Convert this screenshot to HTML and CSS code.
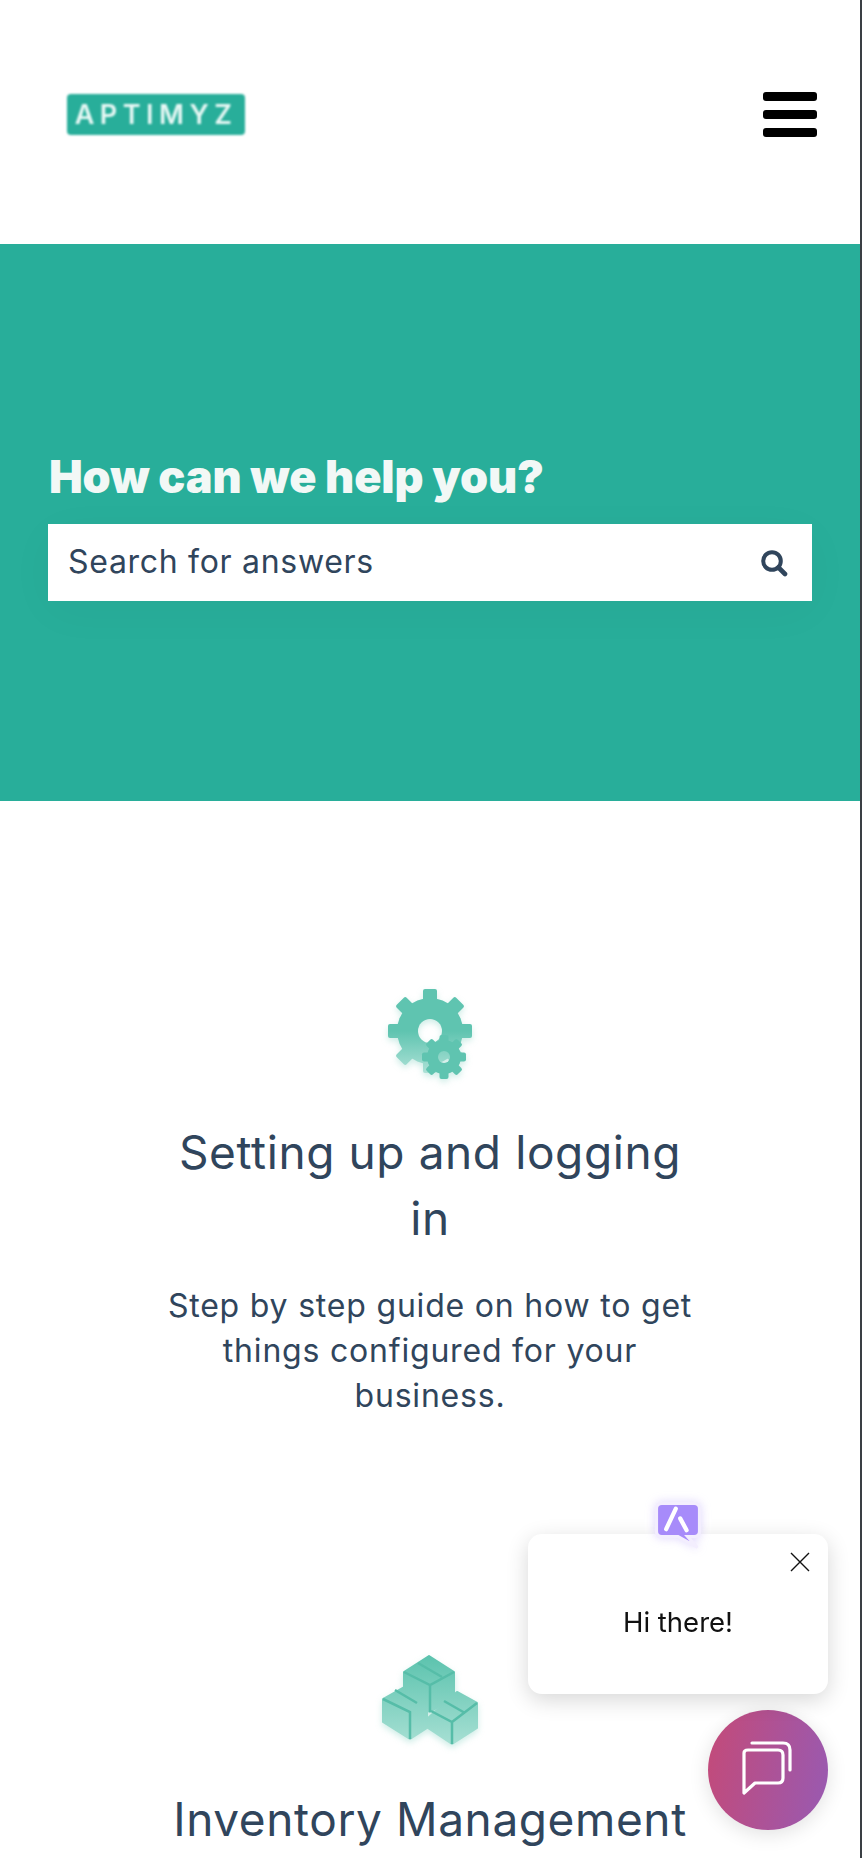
FILE: index.html
```html
<!DOCTYPE html>
<html lang="en">
<head>
    <meta charset="UTF-8">
    <meta name="viewport" content="width=device-width, initial-scale=1.0">
    <title>Aptimyz Help Center</title>
    <link rel="stylesheet" href="styles.css">
</head>
<body>

    <div class="page">
        <header class="topbar">
            <a class="logo" href="#"><span class="logo-text">APTIMYZ</span></a>
            <button class="menu-btn" aria-label="Menu">
                <span></span>
                <span></span>
                <span></span>
            </button>
        </header>

        <section class="hero">
            <h1>How can we help you?</h1>
            <div class="search">
                <span class="search-text">Search for answers</span>
                <svg class="search-icon" viewBox="0 0 28 28">
                    <circle cx="12" cy="12" r="8.8" fill="none" stroke="#30455c" stroke-width="4"/>
                    <path d="M18.5 18.5 L25 25" stroke="#30455c" stroke-width="4.6" stroke-linecap="round"/>
                </svg>
            </div>
        </section>

        <section class="topics">
            <div class="topic">
                <svg class="topic-icon gear-icon" viewBox="0 0 100 100">
                    <defs>
                        <linearGradient id="gearFade" gradientUnits="userSpaceOnUse" x1="0" y1="44" x2="0" y2="90">
                            <stop offset="0" stop-color="#5fc4b0"/>
                            <stop offset="1" stop-color="#b4e4da"/>
                        </linearGradient>
                        <mask id="bigGear">
                            <g fill="#fff">
                                <circle cx="50" cy="44" r="33"/>
                                <rect x="43" y="2" width="14" height="84" rx="2"/>
                                <rect x="43" y="2" width="14" height="84" rx="2" transform="rotate(45 50 44)"/>
                                <rect x="43" y="2" width="14" height="84" rx="2" transform="rotate(90 50 44)"/>
                                <rect x="43" y="2" width="14" height="84" rx="2" transform="rotate(135 50 44)"/>
                            </g>
                            <circle cx="50" cy="44" r="12" fill="#000"/>
                        </mask>
                        <mask id="smallGear">
                            <g fill="#fff">
                                <circle cx="64" cy="70" r="17"/>
                                <rect x="59.500" y="48" width="9" height="44" rx="2"/>
                                <rect x="59.500" y="48" width="9" height="44" rx="2" transform="rotate(45 64 70)"/>
                                <rect x="59.500" y="48" width="9" height="44" rx="2" transform="rotate(90 64 70)"/>
                                <rect x="59.500" y="48" width="9" height="44" rx="2" transform="rotate(135 64 70)"/>
                            </g>
                            <circle cx="64" cy="70" r="6" fill="#000"/>
                        </mask>
                    </defs>
                    <rect width="100" height="100" fill="url(#gearFade)" mask="url(#bigGear)"/>
                    <rect width="100" height="100" fill="#5fc4b0" mask="url(#smallGear)"/>
                </svg>
                <h2>Setting up and logging in</h2>
                <p>Step by step guide on how to get things configured for your business.</p>
            </div>

            <div class="topic">
                <svg class="topic-icon box-icon" viewBox="0 0 100 100">
                    <defs>
                        <linearGradient id="boxFade" gradientUnits="userSpaceOnUse" x1="0" y1="5" x2="0" y2="95">
                            <stop offset="0" stop-color="#5cc3ae"/>
                            <stop offset="1" stop-color="#a8e0d4"/>
                        </linearGradient>
                    </defs>
                    <g fill="url(#boxFade)" stroke="url(#boxFade)" stroke-width="2" stroke-linejoin="round">
                        <polygon points="3,48 26,35 47,48 47,77 30,88 3,71"/>
                        <polygon points="48,67 77,41 97,52 97,77 72,93 48,77"/>
                        <polygon points="24,21 49,5 74,21 74,47 50,61 24,47"/>
                    </g>
                    <g fill="none" stroke="#56bda8" stroke-width="2.500">
                        <path d="M3 48 L30 61 V88"/>
                        <path d="M15 39 L37 52"/>
                        <path d="M24 21 L50 34 L74 21 M50 34 V61"/>
                        <path d="M38 12 L62 26"/>
                        <path d="M51 60 L72 71 L97 52 M72 71 V93"/>
                        <path d="M64 50 L85 62"/>
                    </g>
                </svg>
                <h2>Inventory Management</h2>
            </div>
        </section>
    </div>

    <div class="chat-widget">
        <svg class="chat-avatar" viewBox="0 0 48 52">
            <path d="M9 4 H39 Q44 4 44 9 V30 Q44 35 39 35 H33 L42 45 L24 35 H9 Q4 35 4 30 V9 Q4 4 9 4 Z" fill="#a78bfa" stroke="#f3eefe" stroke-width="3"/>
            <path d="M22 9 L13 28" stroke="#fff" stroke-width="4" stroke-linecap="round"/>
            <path d="M26 18 L32 29" stroke="#fff" stroke-width="4" stroke-linecap="round"/>
        </svg>
        <div class="chat-popup">
            <svg class="chat-close" viewBox="0 0 20 20">
                <path d="M1 1 L19 19 M19 1 L1 19" stroke="#111" stroke-width="1.400"/>
            </svg>
            <span>Hi there!</span>
        </div>
        <div class="chat-btn">
            <svg viewBox="0 0 60 60">
                <path d="M14 3 H45 Q52 3 52 10 V30" fill="none" stroke="#fff" stroke-width="3.200" stroke-linecap="round"/>
                <path d="M6 13 Q6 10 10 10 H40 Q45 10 45 15 V38 Q45 43 40 43 H17 L6 53 Z" fill="none" stroke="#fff" stroke-width="3.200" stroke-linejoin="round"/>
            </svg>
        </div>
    </div>

</body>
</html>
```

FILE: styles.css
```css
html, body {
    margin: 0;
    padding: 0;
    height: 100%;
    overflow: hidden;
    background-color: white;
}
body {
    font-family: "Inter", "Noto Sans", sans-serif;
    color: #30455c;
}
.page {
    width: 860px;
    height: 1858px;
    overflow: hidden;
    border-right: 2px solid #3a3f44;
}
.topbar {
    height: 244px;
    display: flex;
    align-items: flex-start;
    justify-content: space-between;
    padding: 92px 43px 0 67px;
    box-sizing: border-box;
}
.logo {
    display: flex;
    align-items: center;
    justify-content: center;
    width: 178px;
    height: 41px;
    margin-top: 2px;
    background-color: #28ae9a;
    border-radius: 4px;
    text-decoration: none;
    filter: blur(0.8px);
}
.logo-text {
    color: #e8f8f5;
    font-size: 27px;
    letter-spacing: 5.500px;
    font-weight: 600;
}
.menu-btn {
    display: flex;
    flex-direction: column;
    gap: 9px;
    width: 54px;
    padding: 0;
    border: none;
    background: none;
}
.menu-btn span {
    display: block;
    height: 9px;
    background-color: black;
    border-radius: 3px;
}
.hero {
    height: 557px;
    box-sizing: border-box;
    padding: 208px 48px 0;
    background-color: #28ae9a;
}
.hero h1 {
    margin: 0 0 22px;
    padding-left: 1px;
    color: #f2f8f6;
    font-size: 45px;
    line-height: 50px;
    font-weight: 900;
    letter-spacing: -0.15px;
}
.search {
    display: flex;
    align-items: center;
    justify-content: space-between;
    height: 77px;
    padding: 0 24px 0 20px;
    background-color: white;
    box-shadow: 0 10px 50px rgba(0, 0, 0, 0.03);
}
.search-text {
    margin-top: -3px;
    font-size: 32px;
    letter-spacing: 0.7px;
}
.search-icon {
    width: 28px;
    height: 28px;
}
.topics {
    display: flex;
    flex-direction: column;
    align-items: center;
}
.topic {
    width: 540px;
    text-align: center;
}
.topic-icon {
    display: block;
    margin: 0 auto;
    width: 100px;
    height: 100px;
    filter: drop-shadow(0 3px 3px rgba(95, 196, 176, 0.3)) blur(0.4px);
}
.gear-icon {
    margin-top: 186px;
}
.box-icon {
    margin-top: 233px;
    margin-bottom: 35px;
}
.topic h2 {
    width: 530px;
    margin: 32px auto 32px;
    font-size: 46px;
    line-height: 66px;
    font-weight: 400;
    letter-spacing: 0.6px;
}
.topic p {
    margin: 0;
    font-size: 32px;
    line-height: 45px;
    font-weight: 400;
    letter-spacing: 0.8px;
}
.chat-widget {
    position: fixed;
    right: 34px;
    bottom: 28px;
    width: 300px;
}
.chat-avatar {
    position: absolute;
    z-index: 1;
    top: -35px;
    left: 124px;
    width: 52px;
    height: 56px;
    filter: drop-shadow(0 0 5px rgba(167, 139, 250, 0.35));
}
.chat-popup {
    position: relative;
    display: flex;
    align-items: center;
    justify-content: center;
    height: 160px;
    box-sizing: border-box;
    padding-top: 16px;
    margin-bottom: 16px;
    background-color: white;
    border-radius: 14px;
    box-shadow: 0 6px 22px rgba(0, 0, 0, 0.16);
    color: #111;
    font-size: 27.500px;
}
.chat-close {
    position: absolute;
    top: 18px;
    right: 18px;
    width: 20px;
    height: 20px;
}
.chat-btn {
    display: flex;
    align-items: center;
    justify-content: center;
    width: 120px;
    height: 120px;
    margin-left: auto;
    border-radius: 50%;
    background: linear-gradient(100deg, #c44a78, #985ab2);
    box-shadow: 0 4px 20px rgba(0, 0, 0, 0.12);
}
.chat-btn svg {
    width: 60px;
    height: 60px;
}
```
